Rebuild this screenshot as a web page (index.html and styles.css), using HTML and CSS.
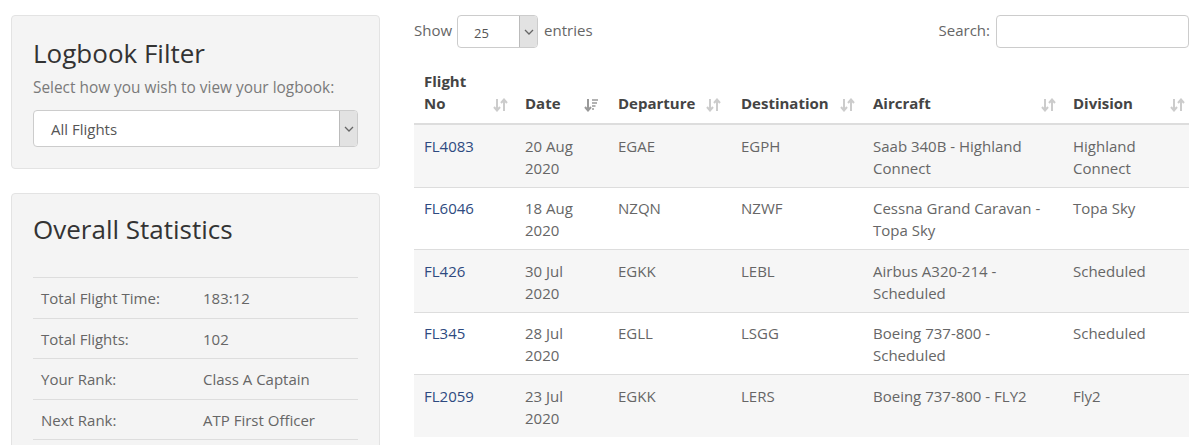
FILE: index.html
```html
<!DOCTYPE html>
<html>
<head>
<meta charset="utf-8">
<link rel="stylesheet" href="styles.css">
</head>
<body>
<div class="page">
  <aside class="sidebar">
    <section class="panel">
      <h2 class="panel-title">Logbook Filter</h2>
      <p class="panel-help">Select how you wish to view your logbook:</p>
      <div class="fake-select fake-select-lg">
        <span class="fake-select-text">All Flights</span>
        <span class="fake-select-arrow"><svg width="10" height="6" viewBox="0 0 10 6"><path d="M1 1 L5 5 L9 1" fill="none" stroke="#666" stroke-width="1.3"/></svg></span>
      </div>
    </section>
    <section class="panel panel-stats">
      <h2 class="panel-title">Overall Statistics</h2>
      <table class="stats">
        <tr><td class="stat-label">Total Flight Time:</td><td>183:12</td></tr>
        <tr><td class="stat-label">Total Flights:</td><td>102</td></tr>
        <tr><td class="stat-label">Your Rank:</td><td>Class A Captain</td></tr>
        <tr><td class="stat-label">Next Rank:</td><td>ATP First Officer</td></tr>
      </table>
    </section>
  </aside>
  <main class="main">
    <div class="toolbar">
      <div class="length">
        <span class="tlabel">Show</span>
        <div class="fake-select fake-select-sm">
          <span class="fake-select-text">25</span>
          <span class="fake-select-arrow"><svg width="10" height="6" viewBox="0 0 10 6"><path d="M1 1 L5 5 L9 1" fill="none" stroke="#666" stroke-width="1.3"/></svg></span>
        </div>
        <span class="tlabel">entries</span>
      </div>
      <div class="search">
        <span class="tlabel">Search:</span>
        <div class="search-input"></div>
      </div>
    </div>
    <table class="log">
      <colgroup>
        <col class="c-fl"><col class="c-date"><col class="c-dep"><col class="c-dest"><col class="c-ac"><col class="c-div">
      </colgroup>
      <thead>
        <tr>
          <th>Flight No<span class="sort"><svg width="15" height="14" viewBox="0 0 15 14"><path d="M4 1 V12 M1 9 L4 12.5 L7 9" fill="none" stroke="#ccc" stroke-width="2"/><path d="M11 13 V2 M8 5 L11 1.5 L14 5" fill="none" stroke="#ccc" stroke-width="2"/></svg></span></th>
          <th class="r-date">Date<span class="sort"><svg width="15" height="14" viewBox="0 0 15 14"><path d="M4 1 V12 M1 9 L4 12.5 L7 9" fill="none" stroke="#999" stroke-width="2"/><path d="M8 2 H14 M8 5 H13 M8 8 H11.5 M8 11 H10" fill="none" stroke="#999" stroke-width="1.6"/></svg></span></th>
          <th class="r-dep">Departure<span class="sort"><svg width="15" height="14" viewBox="0 0 15 14"><path d="M4 1 V12 M1 9 L4 12.5 L7 9" fill="none" stroke="#ccc" stroke-width="2"/><path d="M11 13 V2 M8 5 L11 1.5 L14 5" fill="none" stroke="#ccc" stroke-width="2"/></svg></span></th>
          <th class="r-dest">Destination<span class="sort"><svg width="15" height="14" viewBox="0 0 15 14"><path d="M4 1 V12 M1 9 L4 12.5 L7 9" fill="none" stroke="#ccc" stroke-width="2"/><path d="M11 13 V2 M8 5 L11 1.5 L14 5" fill="none" stroke="#ccc" stroke-width="2"/></svg></span></th>
          <th class="r-ac">Aircraft<span class="sort"><svg width="15" height="14" viewBox="0 0 15 14"><path d="M4 1 V12 M1 9 L4 12.5 L7 9" fill="none" stroke="#ccc" stroke-width="2"/><path d="M11 13 V2 M8 5 L11 1.5 L14 5" fill="none" stroke="#ccc" stroke-width="2"/></svg></span></th>
          <th class="r-div">Division<span class="sort"><svg width="15" height="14" viewBox="0 0 15 14"><path d="M4 1 V12 M1 9 L4 12.5 L7 9" fill="none" stroke="#ccc" stroke-width="2"/><path d="M11 13 V2 M8 5 L11 1.5 L14 5" fill="none" stroke="#ccc" stroke-width="2"/></svg></span></th>
        </tr>
      </thead>
      <tbody>
        <tr><td><a href="#">FL4083</a></td><td>20 Aug 2020</td><td>EGAE</td><td>EGPH</td><td>Saab 340B - Highland Connect</td><td>Highland Connect</td></tr>
        <tr><td><a href="#">FL6046</a></td><td>18 Aug 2020</td><td>NZQN</td><td>NZWF</td><td>Cessna Grand Caravan - Topa Sky</td><td>Topa Sky</td></tr>
        <tr><td><a href="#">FL426</a></td><td>30 Jul 2020</td><td>EGKK</td><td>LEBL</td><td>Airbus A320-214 - Scheduled</td><td>Scheduled</td></tr>
        <tr><td><a href="#">FL345</a></td><td>28 Jul 2020</td><td>EGLL</td><td>LSGG</td><td>Boeing 737-800 - Scheduled</td><td>Scheduled</td></tr>
        <tr><td><a href="#">FL2059</a></td><td>23 Jul 2020</td><td>EGKK</td><td>LERS</td><td>Boeing 737-800 - FLY2</td><td>Fly2</td></tr>
      </tbody>
    </table>
  </main>
</div>
</body>
</html>
```

FILE: styles.css
```css
html, body {
  margin: 0;
  padding: 0;
  background: #fff;
}
body {
  font-family: "Open Sans", "DejaVu Sans", sans-serif;
  font-size: 15px;
  color: #666;
  overflow: hidden;
  height: 445px;
}
.page {
  display: flex;
  align-items: flex-start;
  padding: 15px 11px 0 11px;
  gap: 34px;
  height: 430px;
  overflow: hidden;
}
.sidebar {
  width: 369px;
  flex: 0 0 369px;
  display: flex;
  flex-direction: column;
  gap: 24px;
}
.panel {
  background: #f4f4f4;
  border: 1px solid #e3e3e3;
  border-radius: 4px;
  padding: 19px 21px 21px 21px;
}
.panel-title {
  margin: 0;
  font-weight: 400;
  font-size: 26px;
  line-height: 36px;
  color: #333;
}
.panel-help {
  margin: 7px 0 12px 0;
  font-size: 15.4px;
  line-height: 20px;
  color: #7a7a7a;
}
.fake-select {
  display: flex;
  align-items: stretch;
  background: #fff;
  border: 1px solid #ccc;
  border-radius: 4px;
  box-sizing: border-box;
  overflow: hidden;
}
.fake-select-text {
  flex: 1;
  display: flex;
  align-items: center;
  color: #555;
}
.fake-select-arrow {
  width: 17px;
  background: #e2e2e2;
  border-left: 1px solid #bbb;
  display: flex;
  align-items: center;
  justify-content: center;
}
.fake-select-lg {
  height: 37px;
  font-size: 15px;
}
.fake-select-lg .fake-select-text {
  padding-left: 17px;
}
.fake-select-sm {
  width: 81px;
  height: 33px;
  font-size: 13px;
}
.fake-select-sm .fake-select-text {
  padding-left: 16px;
  padding-top: 2px;
}
.panel-stats {
  padding-top: 17px;
  padding-bottom: 0;
  height: 240px;
}
.stats {
  margin-top: 30px;
  width: 100%;
  border-collapse: collapse;
  font-size: 15px;
}
.stats td {
  border-top: 1px solid #ddd;
  border-bottom: 1px solid #ddd;
  padding: 9px 8px 8.5px 8px;
  line-height: 22px;
  color: #666;
}
.stats .stat-label {
  width: 146px;
}
.main {
  flex: 1;
  min-width: 0;
}
.toolbar {
  display: flex;
  justify-content: space-between;
  align-items: center;
  font-size: 15px;
  color: #666;
  height: 33px;
}
.tlabel {
  padding-bottom: 3px;
}
.length {
  display: flex;
  align-items: center;
  gap: 5px;
}
.length .fake-select {
  margin-right: 1px;
}
.search {
  display: flex;
  align-items: center;
  gap: 6px;
}
.search-input {
  width: 193px;
  height: 33px;
  box-sizing: border-box;
  border: 1px solid #ccc;
  border-radius: 4px;
  background: #fff;
}
.log {
  margin-top: 14px;
  width: 775px;
  table-layout: fixed;
  border-collapse: collapse;
}
.c-fl { width: 101px; }
.c-date { width: 93px; }
.c-dep { width: 123px; }
.c-dest { width: 132px; }
.c-ac { width: 200px; }
.c-div { width: 126px; }
.log th {
  position: relative;
  text-align: left;
  font-weight: 700;
  color: #444;
  font-size: 15px;
  line-height: 22px;
  padding: 8px 30px 9px 10px;
  vertical-align: bottom;
  border-bottom: 2px solid #ddd;
}
.log th .sort {
  position: absolute;
  right: 7px;
  bottom: 11px;
  line-height: 0;
}
.log th.r-date .sort { right: 9px; }
.log th.r-dep .sort { right: 10px; }
.log th.r-dest .sort { right: 8px; }
.log th.r-ac .sort { right: 7px; }
.log th.r-div .sort { right: 4px; }
.log td {
  padding: 9.6px 8px 8px 10px;
  line-height: 22px;
  vertical-align: top;
  border-top: 1px solid #ddd;
  font-size: 15px;
  color: #666;
}
.log tbody tr:nth-child(odd) td {
  background: #f6f6f6;
}
.log a {
  color: #2e4a80;
  text-decoration: none;
}
```
